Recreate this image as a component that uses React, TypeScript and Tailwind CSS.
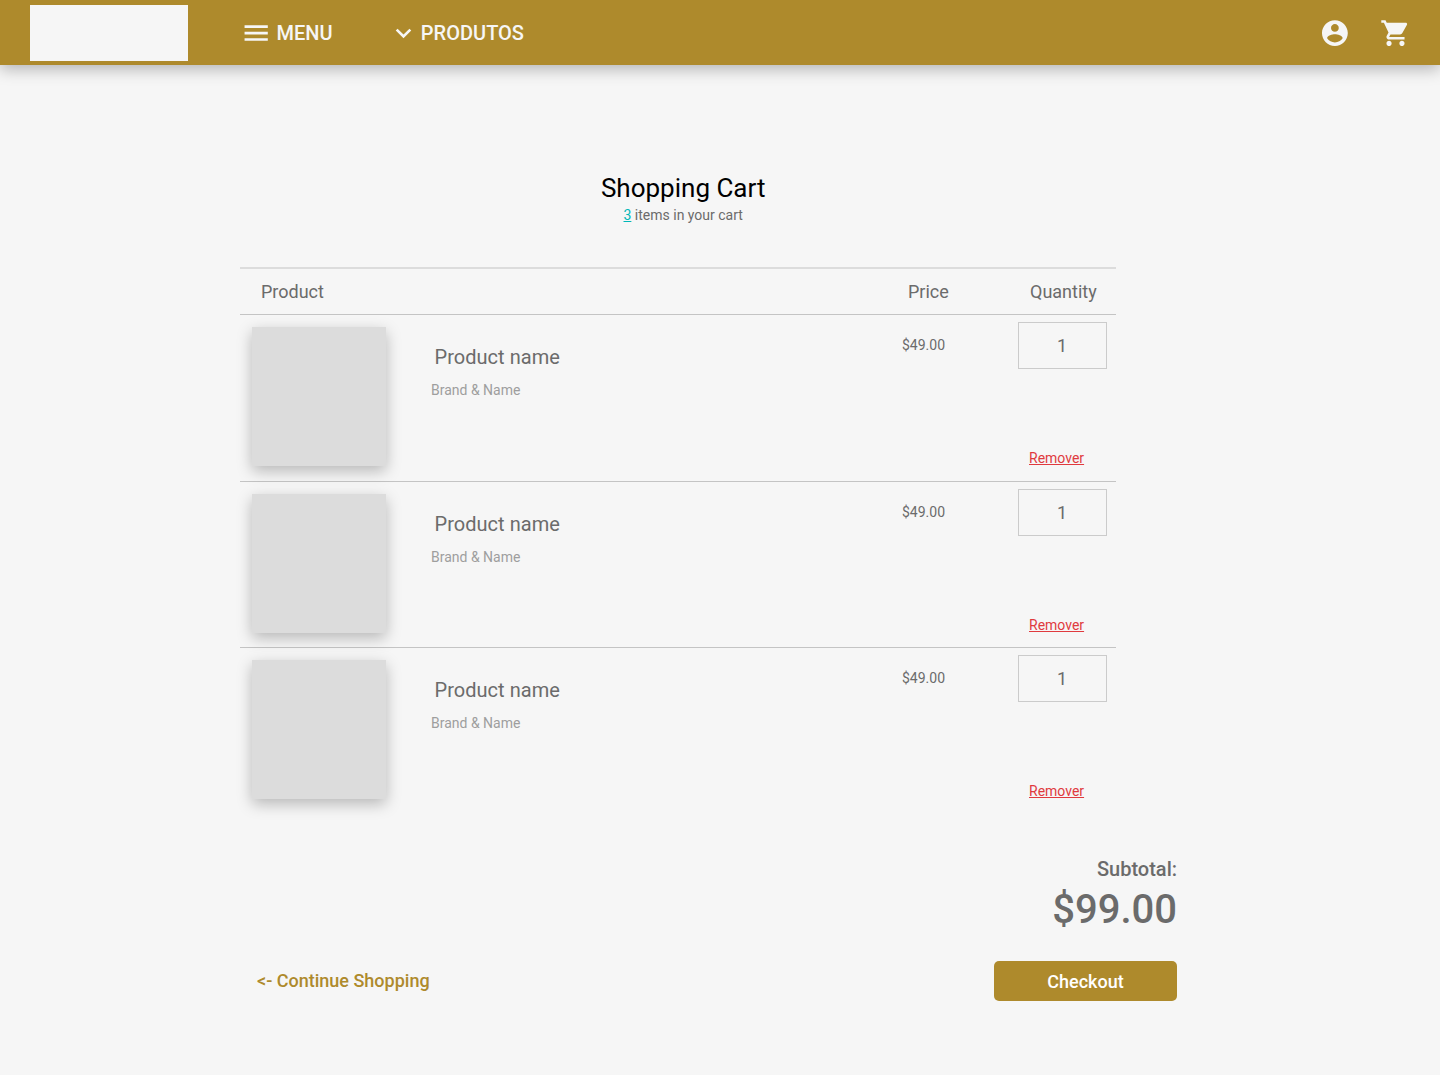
import React from "react";

function Icon({ d, viewBox = "0 0.3 24 24" }: { d: string; viewBox?: string }) {
  return (
    <svg viewBox={viewBox} fill="currentColor" className="mt-px size-[31px] shrink-0" aria-hidden="true">
      <path d={d} />
    </svg>
  );
}

const icons = {
  menu: "M3 18h18v-2H3v2zm0-5h18v-2H3v2zm0-7v2h18V6H3z",
  expand: "M16.59 8.59L12 13.17 7.41 8.59 6 10l6 6 6-6z",
  account:
    "M12 2C6.48 2 2 6.48 2 12s4.48 10 10 10 10-4.48 10-10S17.52 2 12 2zm0 3c1.66 0 3 1.34 3 3s-1.34 3-3 3-3-1.34-3-3 1.34-3 3-3zm0 14.2c-2.5 0-4.71-1.28-6-3.22.03-1.99 4-3.08 6-3.08 1.99 0 5.97 1.09 6 3.08-1.29 1.94-3.5 3.22-6 3.22z",
  cart: "M7 18c-1.1 0-1.99.9-1.99 2S5.9 22 7 22s2-.9 2-2-.9-2-2-2zM1 2v2h2l3.6 7.59-1.35 2.45c-.16.28-.25.61-.25.96 0 1.1.9 2 2 2h12v-2H7.42c-.14 0-.25-.11-.25-.25l.03-.12.9-1.63h7.45c.75 0 1.41-.41 1.75-1.03l3.58-6.49c.08-.14.12-.31.12-.48 0-.55-.45-1-1-1H5.21l-.94-2H1zm16 16c-1.1 0-1.99.9-1.99 2s.89 2 1.99 2 2-.9 2-2-.9-2-2-2z",
};

function Header() {
  return (
    <header className="flex h-[65px] items-center bg-[#ae8a2c] text-[#f6f6f6] shadow-[0_4px_15px_rgba(0,0,0,0.28)]">
      <div className="ml-[30px] h-14 w-[158.4px] bg-[#f6f6f6]" />
      <nav className="flex items-center text-xl font-medium">
        <a className="ml-[52.6px] flex items-center">
          <Icon d={icons.menu} viewBox="0.25 0.3 24 24" />
          <span className="ml-[4.5px]">MENU</span>
        </a>
        <a className="ml-[55.3px] flex items-center">
          <Icon d={icons.expand} />
          <span className="ml-[2px]">PRODUTOS</span>
        </a>
      </nav>
      <div className="mr-[29px] ml-auto flex gap-[30px]">
        <Icon d={icons.account} viewBox="-0.3 0.3 24 24" />
        <Icon d={icons.cart} />
      </div>
    </header>
  );
}

function CartRow({ height }: { height: string }) {
  return (
    <li className={`flex border-t border-[#c4c4c4] ${height}`}>
      <div className="mt-3 ml-3 h-[139px] w-[134px] rounded-b-[3px] bg-[#dcdcdc] shadow-[0_5px_15px_rgba(0,0,0,0.26)]" />
      <div className="mt-[30px] ml-[45px] flex w-[471px] flex-col">
        <h2 className="ml-[3.5px] text-[20px] leading-6 tracking-[0.04px]">Product name</h2>
        <p className="mt-[11px] text-sm leading-5 text-[#9e9e9e]">Brand &amp; Name</p>
      </div>
      <span className="mt-5 w-[116px] text-sm leading-5">$49.00</span>
      <div className="mt-[7px] w-[89px]">
        <div className="flex h-[47px] items-center justify-center border border-[#cbcbcb] pr-px text-lg">1</div>
        <a className="mt-[79px] ml-[11px] block text-sm leading-5 text-[#e03a3e] underline">Remover</a>
      </div>
    </li>
  );
}

const rowHeights = ["h-[167px]", "h-[166px]", "h-[167px]"];

export default function App() {
  return (
    <div className="h-[1075px] overflow-hidden bg-[#f6f6f6] font-['Roboto',sans-serif] text-[#6b6b6b]">
      <Header />
      <main className="ml-60 w-[937px]">
        <div className="flex w-[886.4px] flex-col items-center pt-[107px]">
          <h1 className="text-[26px] leading-8 text-black">Shopping Cart</h1>
          <p className="mt-px text-sm leading-5">
            <span className="text-[#00b8b8] underline">3</span> items in your cart
          </p>
        </div>
        <section className="mt-[42px] w-[876px]">
          <div className="flex h-[47px] border-t-2 border-[#dcdcdc] pt-[11px] text-lg leading-6">
            <span className="ml-[21px] w-[647px]">Product</span>
            <span className="w-[122px]">Price</span>
            <span>Quantity</span>
          </div>
          <ul>
            {rowHeights.map((h, i) => (
              <CartRow key={i} height={h} />
            ))}
          </ul>
        </section>
        <div className="mt-[43px] flex flex-col items-end font-medium">
          <span className="text-xl leading-6">Subtotal:</span>
          <span className="mt-[5px] text-[40px] leading-[48px]">$99.00</span>
        </div>
        <div className="mt-[27px] flex items-center justify-between font-medium">
          <a className="ml-[17px] text-lg text-[#ae8a2c]">&lt;- Continue Shopping</a>
          <button className="h-10 w-[183px] rounded-[5px] bg-[#ae8a2c] pt-px text-lg text-white">Checkout</button>
        </div>
      </main>
    </div>
  );
}
